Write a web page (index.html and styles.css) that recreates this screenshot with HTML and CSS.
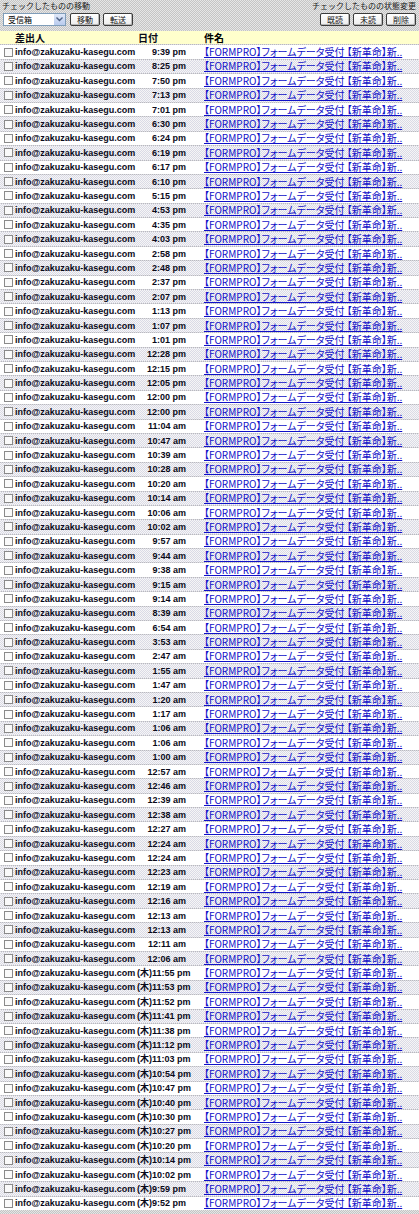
FILE: index.html
```html
<!DOCTYPE html>
<html lang="ja">
<head>
<meta charset="utf-8">
<link rel="stylesheet" href="styles.css">
</head>
<body>
<div class="page">
  <div class="toolbar">
    <div class="tgroup">
      <div class="tlabel">チェックしたものの移動</div>
      <div class="tctrls">
        <div class="select"><span class="sel-text">受信箱</span><span class="sel-btn"><svg width="7" height="5" viewBox="0 0 7 5"><path d="M0.5 0.5 L3.5 3.5 L6.5 0.5" fill="none" stroke="#4d6185" stroke-width="1.4"/></svg></span></div>
        <span class="btn">移動</span>
        <span class="btn">転送</span>
      </div>
    </div>
    <div class="tgroup right">
      <div class="tlabel">チェックしたものの状態変更</div>
      <div class="tctrls">
        <span class="btn">既読</span>
        <span class="btn">未読</span>
        <span class="btn">削除</span>
      </div>
    </div>
  </div>
  <div class="list">
    <div class="row head"><span class="cb-cell"></span><span class="from">差出人</span><span class="date">日付</span><span class="subj">件名</span></div>
    <div class="row"><span class="cb-cell"><span class="cb"></span></span><span class="from">info@zakuzaku-kasegu.com</span><span class="date">9:39 pm</span><a class="subj" href="#">【FORMPRO】フォームデータ受付 【新革命】新..</a></div>
    <div class="row"><span class="cb-cell"><span class="cb"></span></span><span class="from">info@zakuzaku-kasegu.com</span><span class="date">8:25 pm</span><a class="subj" href="#">【FORMPRO】フォームデータ受付 【新革命】新..</a></div>
    <div class="row"><span class="cb-cell"><span class="cb"></span></span><span class="from">info@zakuzaku-kasegu.com</span><span class="date">7:50 pm</span><a class="subj" href="#">【FORMPRO】フォームデータ受付 【新革命】新..</a></div>
    <div class="row"><span class="cb-cell"><span class="cb"></span></span><span class="from">info@zakuzaku-kasegu.com</span><span class="date">7:13 pm</span><a class="subj" href="#">【FORMPRO】フォームデータ受付 【新革命】新..</a></div>
    <div class="row"><span class="cb-cell"><span class="cb"></span></span><span class="from">info@zakuzaku-kasegu.com</span><span class="date">7:01 pm</span><a class="subj" href="#">【FORMPRO】フォームデータ受付 【新革命】新..</a></div>
    <div class="row"><span class="cb-cell"><span class="cb"></span></span><span class="from">info@zakuzaku-kasegu.com</span><span class="date">6:30 pm</span><a class="subj" href="#">【FORMPRO】フォームデータ受付 【新革命】新..</a></div>
    <div class="row"><span class="cb-cell"><span class="cb"></span></span><span class="from">info@zakuzaku-kasegu.com</span><span class="date">6:24 pm</span><a class="subj" href="#">【FORMPRO】フォームデータ受付 【新革命】新..</a></div>
    <div class="row"><span class="cb-cell"><span class="cb"></span></span><span class="from">info@zakuzaku-kasegu.com</span><span class="date">6:19 pm</span><a class="subj" href="#">【FORMPRO】フォームデータ受付 【新革命】新..</a></div>
    <div class="row"><span class="cb-cell"><span class="cb"></span></span><span class="from">info@zakuzaku-kasegu.com</span><span class="date">6:17 pm</span><a class="subj" href="#">【FORMPRO】フォームデータ受付 【新革命】新..</a></div>
    <div class="row"><span class="cb-cell"><span class="cb"></span></span><span class="from">info@zakuzaku-kasegu.com</span><span class="date">6:10 pm</span><a class="subj" href="#">【FORMPRO】フォームデータ受付 【新革命】新..</a></div>
    <div class="row"><span class="cb-cell"><span class="cb"></span></span><span class="from">info@zakuzaku-kasegu.com</span><span class="date">5:15 pm</span><a class="subj" href="#">【FORMPRO】フォームデータ受付 【新革命】新..</a></div>
    <div class="row"><span class="cb-cell"><span class="cb"></span></span><span class="from">info@zakuzaku-kasegu.com</span><span class="date">4:53 pm</span><a class="subj" href="#">【FORMPRO】フォームデータ受付 【新革命】新..</a></div>
    <div class="row"><span class="cb-cell"><span class="cb"></span></span><span class="from">info@zakuzaku-kasegu.com</span><span class="date">4:35 pm</span><a class="subj" href="#">【FORMPRO】フォームデータ受付 【新革命】新..</a></div>
    <div class="row"><span class="cb-cell"><span class="cb"></span></span><span class="from">info@zakuzaku-kasegu.com</span><span class="date">4:03 pm</span><a class="subj" href="#">【FORMPRO】フォームデータ受付 【新革命】新..</a></div>
    <div class="row"><span class="cb-cell"><span class="cb"></span></span><span class="from">info@zakuzaku-kasegu.com</span><span class="date">2:58 pm</span><a class="subj" href="#">【FORMPRO】フォームデータ受付 【新革命】新..</a></div>
    <div class="row"><span class="cb-cell"><span class="cb"></span></span><span class="from">info@zakuzaku-kasegu.com</span><span class="date">2:48 pm</span><a class="subj" href="#">【FORMPRO】フォームデータ受付 【新革命】新..</a></div>
    <div class="row"><span class="cb-cell"><span class="cb"></span></span><span class="from">info@zakuzaku-kasegu.com</span><span class="date">2:37 pm</span><a class="subj" href="#">【FORMPRO】フォームデータ受付 【新革命】新..</a></div>
    <div class="row"><span class="cb-cell"><span class="cb"></span></span><span class="from">info@zakuzaku-kasegu.com</span><span class="date">2:07 pm</span><a class="subj" href="#">【FORMPRO】フォームデータ受付 【新革命】新..</a></div>
    <div class="row"><span class="cb-cell"><span class="cb"></span></span><span class="from">info@zakuzaku-kasegu.com</span><span class="date">1:13 pm</span><a class="subj" href="#">【FORMPRO】フォームデータ受付 【新革命】新..</a></div>
    <div class="row"><span class="cb-cell"><span class="cb"></span></span><span class="from">info@zakuzaku-kasegu.com</span><span class="date">1:07 pm</span><a class="subj" href="#">【FORMPRO】フォームデータ受付 【新革命】新..</a></div>
    <div class="row"><span class="cb-cell"><span class="cb"></span></span><span class="from">info@zakuzaku-kasegu.com</span><span class="date">1:01 pm</span><a class="subj" href="#">【FORMPRO】フォームデータ受付 【新革命】新..</a></div>
    <div class="row"><span class="cb-cell"><span class="cb"></span></span><span class="from">info@zakuzaku-kasegu.com</span><span class="date">12:28 pm</span><a class="subj" href="#">【FORMPRO】フォームデータ受付 【新革命】新..</a></div>
    <div class="row"><span class="cb-cell"><span class="cb"></span></span><span class="from">info@zakuzaku-kasegu.com</span><span class="date">12:15 pm</span><a class="subj" href="#">【FORMPRO】フォームデータ受付 【新革命】新..</a></div>
    <div class="row"><span class="cb-cell"><span class="cb"></span></span><span class="from">info@zakuzaku-kasegu.com</span><span class="date">12:05 pm</span><a class="subj" href="#">【FORMPRO】フォームデータ受付 【新革命】新..</a></div>
    <div class="row"><span class="cb-cell"><span class="cb"></span></span><span class="from">info@zakuzaku-kasegu.com</span><span class="date">12:00 pm</span><a class="subj" href="#">【FORMPRO】フォームデータ受付 【新革命】新..</a></div>
    <div class="row"><span class="cb-cell"><span class="cb"></span></span><span class="from">info@zakuzaku-kasegu.com</span><span class="date">12:00 pm</span><a class="subj" href="#">【FORMPRO】フォームデータ受付 【新革命】新..</a></div>
    <div class="row"><span class="cb-cell"><span class="cb"></span></span><span class="from">info@zakuzaku-kasegu.com</span><span class="date">11:04 am</span><a class="subj" href="#">【FORMPRO】フォームデータ受付 【新革命】新..</a></div>
    <div class="row"><span class="cb-cell"><span class="cb"></span></span><span class="from">info@zakuzaku-kasegu.com</span><span class="date">10:47 am</span><a class="subj" href="#">【FORMPRO】フォームデータ受付 【新革命】新..</a></div>
    <div class="row"><span class="cb-cell"><span class="cb"></span></span><span class="from">info@zakuzaku-kasegu.com</span><span class="date">10:39 am</span><a class="subj" href="#">【FORMPRO】フォームデータ受付 【新革命】新..</a></div>
    <div class="row"><span class="cb-cell"><span class="cb"></span></span><span class="from">info@zakuzaku-kasegu.com</span><span class="date">10:28 am</span><a class="subj" href="#">【FORMPRO】フォームデータ受付 【新革命】新..</a></div>
    <div class="row"><span class="cb-cell"><span class="cb"></span></span><span class="from">info@zakuzaku-kasegu.com</span><span class="date">10:20 am</span><a class="subj" href="#">【FORMPRO】フォームデータ受付 【新革命】新..</a></div>
    <div class="row"><span class="cb-cell"><span class="cb"></span></span><span class="from">info@zakuzaku-kasegu.com</span><span class="date">10:14 am</span><a class="subj" href="#">【FORMPRO】フォームデータ受付 【新革命】新..</a></div>
    <div class="row"><span class="cb-cell"><span class="cb"></span></span><span class="from">info@zakuzaku-kasegu.com</span><span class="date">10:06 am</span><a class="subj" href="#">【FORMPRO】フォームデータ受付 【新革命】新..</a></div>
    <div class="row"><span class="cb-cell"><span class="cb"></span></span><span class="from">info@zakuzaku-kasegu.com</span><span class="date">10:02 am</span><a class="subj" href="#">【FORMPRO】フォームデータ受付 【新革命】新..</a></div>
    <div class="row"><span class="cb-cell"><span class="cb"></span></span><span class="from">info@zakuzaku-kasegu.com</span><span class="date">9:57 am</span><a class="subj" href="#">【FORMPRO】フォームデータ受付 【新革命】新..</a></div>
    <div class="row"><span class="cb-cell"><span class="cb"></span></span><span class="from">info@zakuzaku-kasegu.com</span><span class="date">9:44 am</span><a class="subj" href="#">【FORMPRO】フォームデータ受付 【新革命】新..</a></div>
    <div class="row"><span class="cb-cell"><span class="cb"></span></span><span class="from">info@zakuzaku-kasegu.com</span><span class="date">9:38 am</span><a class="subj" href="#">【FORMPRO】フォームデータ受付 【新革命】新..</a></div>
    <div class="row"><span class="cb-cell"><span class="cb"></span></span><span class="from">info@zakuzaku-kasegu.com</span><span class="date">9:15 am</span><a class="subj" href="#">【FORMPRO】フォームデータ受付 【新革命】新..</a></div>
    <div class="row"><span class="cb-cell"><span class="cb"></span></span><span class="from">info@zakuzaku-kasegu.com</span><span class="date">9:14 am</span><a class="subj" href="#">【FORMPRO】フォームデータ受付 【新革命】新..</a></div>
    <div class="row"><span class="cb-cell"><span class="cb"></span></span><span class="from">info@zakuzaku-kasegu.com</span><span class="date">8:39 am</span><a class="subj" href="#">【FORMPRO】フォームデータ受付 【新革命】新..</a></div>
    <div class="row"><span class="cb-cell"><span class="cb"></span></span><span class="from">info@zakuzaku-kasegu.com</span><span class="date">6:54 am</span><a class="subj" href="#">【FORMPRO】フォームデータ受付 【新革命】新..</a></div>
    <div class="row"><span class="cb-cell"><span class="cb"></span></span><span class="from">info@zakuzaku-kasegu.com</span><span class="date">3:53 am</span><a class="subj" href="#">【FORMPRO】フォームデータ受付 【新革命】新..</a></div>
    <div class="row"><span class="cb-cell"><span class="cb"></span></span><span class="from">info@zakuzaku-kasegu.com</span><span class="date">2:47 am</span><a class="subj" href="#">【FORMPRO】フォームデータ受付 【新革命】新..</a></div>
    <div class="row"><span class="cb-cell"><span class="cb"></span></span><span class="from">info@zakuzaku-kasegu.com</span><span class="date">1:55 am</span><a class="subj" href="#">【FORMPRO】フォームデータ受付 【新革命】新..</a></div>
    <div class="row"><span class="cb-cell"><span class="cb"></span></span><span class="from">info@zakuzaku-kasegu.com</span><span class="date">1:47 am</span><a class="subj" href="#">【FORMPRO】フォームデータ受付 【新革命】新..</a></div>
    <div class="row"><span class="cb-cell"><span class="cb"></span></span><span class="from">info@zakuzaku-kasegu.com</span><span class="date">1:20 am</span><a class="subj" href="#">【FORMPRO】フォームデータ受付 【新革命】新..</a></div>
    <div class="row"><span class="cb-cell"><span class="cb"></span></span><span class="from">info@zakuzaku-kasegu.com</span><span class="date">1:17 am</span><a class="subj" href="#">【FORMPRO】フォームデータ受付 【新革命】新..</a></div>
    <div class="row"><span class="cb-cell"><span class="cb"></span></span><span class="from">info@zakuzaku-kasegu.com</span><span class="date">1:06 am</span><a class="subj" href="#">【FORMPRO】フォームデータ受付 【新革命】新..</a></div>
    <div class="row"><span class="cb-cell"><span class="cb"></span></span><span class="from">info@zakuzaku-kasegu.com</span><span class="date">1:06 am</span><a class="subj" href="#">【FORMPRO】フォームデータ受付 【新革命】新..</a></div>
    <div class="row"><span class="cb-cell"><span class="cb"></span></span><span class="from">info@zakuzaku-kasegu.com</span><span class="date">1:00 am</span><a class="subj" href="#">【FORMPRO】フォームデータ受付 【新革命】新..</a></div>
    <div class="row"><span class="cb-cell"><span class="cb"></span></span><span class="from">info@zakuzaku-kasegu.com</span><span class="date">12:57 am</span><a class="subj" href="#">【FORMPRO】フォームデータ受付 【新革命】新..</a></div>
    <div class="row"><span class="cb-cell"><span class="cb"></span></span><span class="from">info@zakuzaku-kasegu.com</span><span class="date">12:46 am</span><a class="subj" href="#">【FORMPRO】フォームデータ受付 【新革命】新..</a></div>
    <div class="row"><span class="cb-cell"><span class="cb"></span></span><span class="from">info@zakuzaku-kasegu.com</span><span class="date">12:39 am</span><a class="subj" href="#">【FORMPRO】フォームデータ受付 【新革命】新..</a></div>
    <div class="row"><span class="cb-cell"><span class="cb"></span></span><span class="from">info@zakuzaku-kasegu.com</span><span class="date">12:38 am</span><a class="subj" href="#">【FORMPRO】フォームデータ受付 【新革命】新..</a></div>
    <div class="row"><span class="cb-cell"><span class="cb"></span></span><span class="from">info@zakuzaku-kasegu.com</span><span class="date">12:27 am</span><a class="subj" href="#">【FORMPRO】フォームデータ受付 【新革命】新..</a></div>
    <div class="row"><span class="cb-cell"><span class="cb"></span></span><span class="from">info@zakuzaku-kasegu.com</span><span class="date">12:24 am</span><a class="subj" href="#">【FORMPRO】フォームデータ受付 【新革命】新..</a></div>
    <div class="row"><span class="cb-cell"><span class="cb"></span></span><span class="from">info@zakuzaku-kasegu.com</span><span class="date">12:24 am</span><a class="subj" href="#">【FORMPRO】フォームデータ受付 【新革命】新..</a></div>
    <div class="row"><span class="cb-cell"><span class="cb"></span></span><span class="from">info@zakuzaku-kasegu.com</span><span class="date">12:23 am</span><a class="subj" href="#">【FORMPRO】フォームデータ受付 【新革命】新..</a></div>
    <div class="row"><span class="cb-cell"><span class="cb"></span></span><span class="from">info@zakuzaku-kasegu.com</span><span class="date">12:19 am</span><a class="subj" href="#">【FORMPRO】フォームデータ受付 【新革命】新..</a></div>
    <div class="row"><span class="cb-cell"><span class="cb"></span></span><span class="from">info@zakuzaku-kasegu.com</span><span class="date">12:16 am</span><a class="subj" href="#">【FORMPRO】フォームデータ受付 【新革命】新..</a></div>
    <div class="row"><span class="cb-cell"><span class="cb"></span></span><span class="from">info@zakuzaku-kasegu.com</span><span class="date">12:13 am</span><a class="subj" href="#">【FORMPRO】フォームデータ受付 【新革命】新..</a></div>
    <div class="row"><span class="cb-cell"><span class="cb"></span></span><span class="from">info@zakuzaku-kasegu.com</span><span class="date">12:13 am</span><a class="subj" href="#">【FORMPRO】フォームデータ受付 【新革命】新..</a></div>
    <div class="row"><span class="cb-cell"><span class="cb"></span></span><span class="from">info@zakuzaku-kasegu.com</span><span class="date">12:11 am</span><a class="subj" href="#">【FORMPRO】フォームデータ受付 【新革命】新..</a></div>
    <div class="row"><span class="cb-cell"><span class="cb"></span></span><span class="from">info@zakuzaku-kasegu.com</span><span class="date">12:06 am</span><a class="subj" href="#">【FORMPRO】フォームデータ受付 【新革命】新..</a></div>
    <div class="row"><span class="cb-cell"><span class="cb"></span></span><span class="from">info@zakuzaku-kasegu.com</span><span class="date">(木)11:55 pm</span><a class="subj" href="#">【FORMPRO】フォームデータ受付 【新革命】新..</a></div>
    <div class="row"><span class="cb-cell"><span class="cb"></span></span><span class="from">info@zakuzaku-kasegu.com</span><span class="date">(木)11:53 pm</span><a class="subj" href="#">【FORMPRO】フォームデータ受付 【新革命】新..</a></div>
    <div class="row"><span class="cb-cell"><span class="cb"></span></span><span class="from">info@zakuzaku-kasegu.com</span><span class="date">(木)11:52 pm</span><a class="subj" href="#">【FORMPRO】フォームデータ受付 【新革命】新..</a></div>
    <div class="row"><span class="cb-cell"><span class="cb"></span></span><span class="from">info@zakuzaku-kasegu.com</span><span class="date">(木)11:41 pm</span><a class="subj" href="#">【FORMPRO】フォームデータ受付 【新革命】新..</a></div>
    <div class="row"><span class="cb-cell"><span class="cb"></span></span><span class="from">info@zakuzaku-kasegu.com</span><span class="date">(木)11:38 pm</span><a class="subj" href="#">【FORMPRO】フォームデータ受付 【新革命】新..</a></div>
    <div class="row"><span class="cb-cell"><span class="cb"></span></span><span class="from">info@zakuzaku-kasegu.com</span><span class="date">(木)11:12 pm</span><a class="subj" href="#">【FORMPRO】フォームデータ受付 【新革命】新..</a></div>
    <div class="row"><span class="cb-cell"><span class="cb"></span></span><span class="from">info@zakuzaku-kasegu.com</span><span class="date">(木)11:03 pm</span><a class="subj" href="#">【FORMPRO】フォームデータ受付 【新革命】新..</a></div>
    <div class="row"><span class="cb-cell"><span class="cb"></span></span><span class="from">info@zakuzaku-kasegu.com</span><span class="date">(木)10:54 pm</span><a class="subj" href="#">【FORMPRO】フォームデータ受付 【新革命】新..</a></div>
    <div class="row"><span class="cb-cell"><span class="cb"></span></span><span class="from">info@zakuzaku-kasegu.com</span><span class="date">(木)10:47 pm</span><a class="subj" href="#">【FORMPRO】フォームデータ受付 【新革命】新..</a></div>
    <div class="row"><span class="cb-cell"><span class="cb"></span></span><span class="from">info@zakuzaku-kasegu.com</span><span class="date">(木)10:40 pm</span><a class="subj" href="#">【FORMPRO】フォームデータ受付 【新革命】新..</a></div>
    <div class="row"><span class="cb-cell"><span class="cb"></span></span><span class="from">info@zakuzaku-kasegu.com</span><span class="date">(木)10:30 pm</span><a class="subj" href="#">【FORMPRO】フォームデータ受付 【新革命】新..</a></div>
    <div class="row"><span class="cb-cell"><span class="cb"></span></span><span class="from">info@zakuzaku-kasegu.com</span><span class="date">(木)10:27 pm</span><a class="subj" href="#">【FORMPRO】フォームデータ受付 【新革命】新..</a></div>
    <div class="row"><span class="cb-cell"><span class="cb"></span></span><span class="from">info@zakuzaku-kasegu.com</span><span class="date">(木)10:20 pm</span><a class="subj" href="#">【FORMPRO】フォームデータ受付 【新革命】新..</a></div>
    <div class="row"><span class="cb-cell"><span class="cb"></span></span><span class="from">info@zakuzaku-kasegu.com</span><span class="date">(木)10:14 pm</span><a class="subj" href="#">【FORMPRO】フォームデータ受付 【新革命】新..</a></div>
    <div class="row"><span class="cb-cell"><span class="cb"></span></span><span class="from">info@zakuzaku-kasegu.com</span><span class="date">(木)10:02 pm</span><a class="subj" href="#">【FORMPRO】フォームデータ受付 【新革命】新..</a></div>
    <div class="row"><span class="cb-cell"><span class="cb"></span></span><span class="from">info@zakuzaku-kasegu.com</span><span class="date">(木)9:59 pm</span><a class="subj" href="#">【FORMPRO】フォームデータ受付 【新革命】新..</a></div>
    <div class="row"><span class="cb-cell"><span class="cb"></span></span><span class="from">info@zakuzaku-kasegu.com</span><span class="date">(木)9:52 pm</span><a class="subj" href="#">【FORMPRO】フォームデータ受付 【新革命】新..</a></div>
  </div>
</div>
</body>
</html>
```
FILE: styles.css
```css
html, body {
  margin: 0;
  padding: 0;
}
body {
  width: 419px;
  height: 1214px;
  overflow: hidden;
  font-family: "Liberation Sans", "Noto Sans CJK JP", sans-serif;
  color: #000;
  background: repeating-conic-gradient(#c4c4c4 0 25%, #e6e6e6 0 50%) 0 0 / 2px 2px;
}
.page {
  display: flex;
  flex-direction: column;
}
.toolbar {
  height: 31px;
  display: flex;
  justify-content: space-between;
  padding: 0 3px 0 2px;
  box-sizing: border-box;
}
.tgroup {
  display: flex;
  flex-direction: column;
}
.tgroup.right {
  align-items: flex-end;
}
.tlabel {
  font-family: "Noto Sans CJK JP", sans-serif;
  font-size: 8px;
  line-height: 11px;
  color: #202020;
}
.tctrls {
  display: flex;
  gap: 3px;
  margin-top: 2px;
  align-items: center;
}
.select {
  width: 63px;
  height: 13px;
  box-sizing: border-box;
  border: 1px solid #7f9db9;
  background: #fff;
  display: flex;
  align-items: center;
  justify-content: space-between;
  margin-left: 1px;
  margin-right: 1px;
}
.sel-text {
  font-family: "Noto Sans CJK JP", sans-serif;
  font-size: 8px;
  line-height: 11px;
  padding-left: 4px;
}
.sel-btn {
  width: 11px;
  height: 11px;
  background: linear-gradient(#dfe8f8, #b9cbee);
  display: flex;
  align-items: center;
  justify-content: center;
}
.btn {
  font-family: "Noto Sans CJK JP", sans-serif;
  font-size: 8px;
  line-height: 10px;
  height: 13px;
  box-sizing: border-box;
  padding: 0 6px;
  border: 1px solid #3a3a3a;
  border-radius: 2px;
  background: linear-gradient(#ffffff, #ececec);
  box-shadow: inset -1px -1px 0 #b8b8b8;
  display: flex;
  align-items: center;
  color: #111;
}
.list {
  display: flex;
  flex-direction: column;
  gap: 1px;
  background: repeating-conic-gradient(#b8b8c0 0 25%, #dcdce0 0 50%) 0 0 / 2px 2px;
}
.row {
  height: 13.4px;
  display: grid;
  grid-template-columns: 14px 123px 66px 1fr;
  align-items: center;
  background: #fff;
  font-size: 9px;
  line-height: 12px;
  font-weight: bold;
  white-space: nowrap;
}
.row:nth-child(odd) {
  background: repeating-conic-gradient(#dadae6 0 25%, #f6f6f6 0 50%) 0 0 / 2px 2px;
}
.row.head {
  background: #ffffcc;
  font-family: "Noto Sans CJK JP", sans-serif;
  font-size: 10px;
  line-height: 12px;
}
.row.head .from { padding-left: 1px; }
.row.head .date { text-align: left; padding-left: 1px; padding-right: 0; font-family: "Noto Sans CJK JP", sans-serif; }
.row.head .subj { color: #000; text-decoration: none; font-weight: bold; font-size: 10px; }
.cb-cell {
  display: flex;
  align-items: center;
  justify-content: center;
  padding-left: 2px;
}
.cb {
  width: 7px;
  height: 7px;
  border: 1px solid #8a8a8a;
  background: #fafafa;
}
.from {
  padding-left: 1px;
  color: #0a0a1a;
}
.date {
  text-align: right;
  padding-right: 17px;
  color: #0a0a1a;
}
.subj {
  color: #1010c8;
  text-decoration: underline;
  font-family: "Noto Sans CJK JP", sans-serif;
  font-feature-settings: "palt";
  font-weight: normal;
  font-size: 10px;
  line-height: 12px;
  padding-left: 1px;
}
```
